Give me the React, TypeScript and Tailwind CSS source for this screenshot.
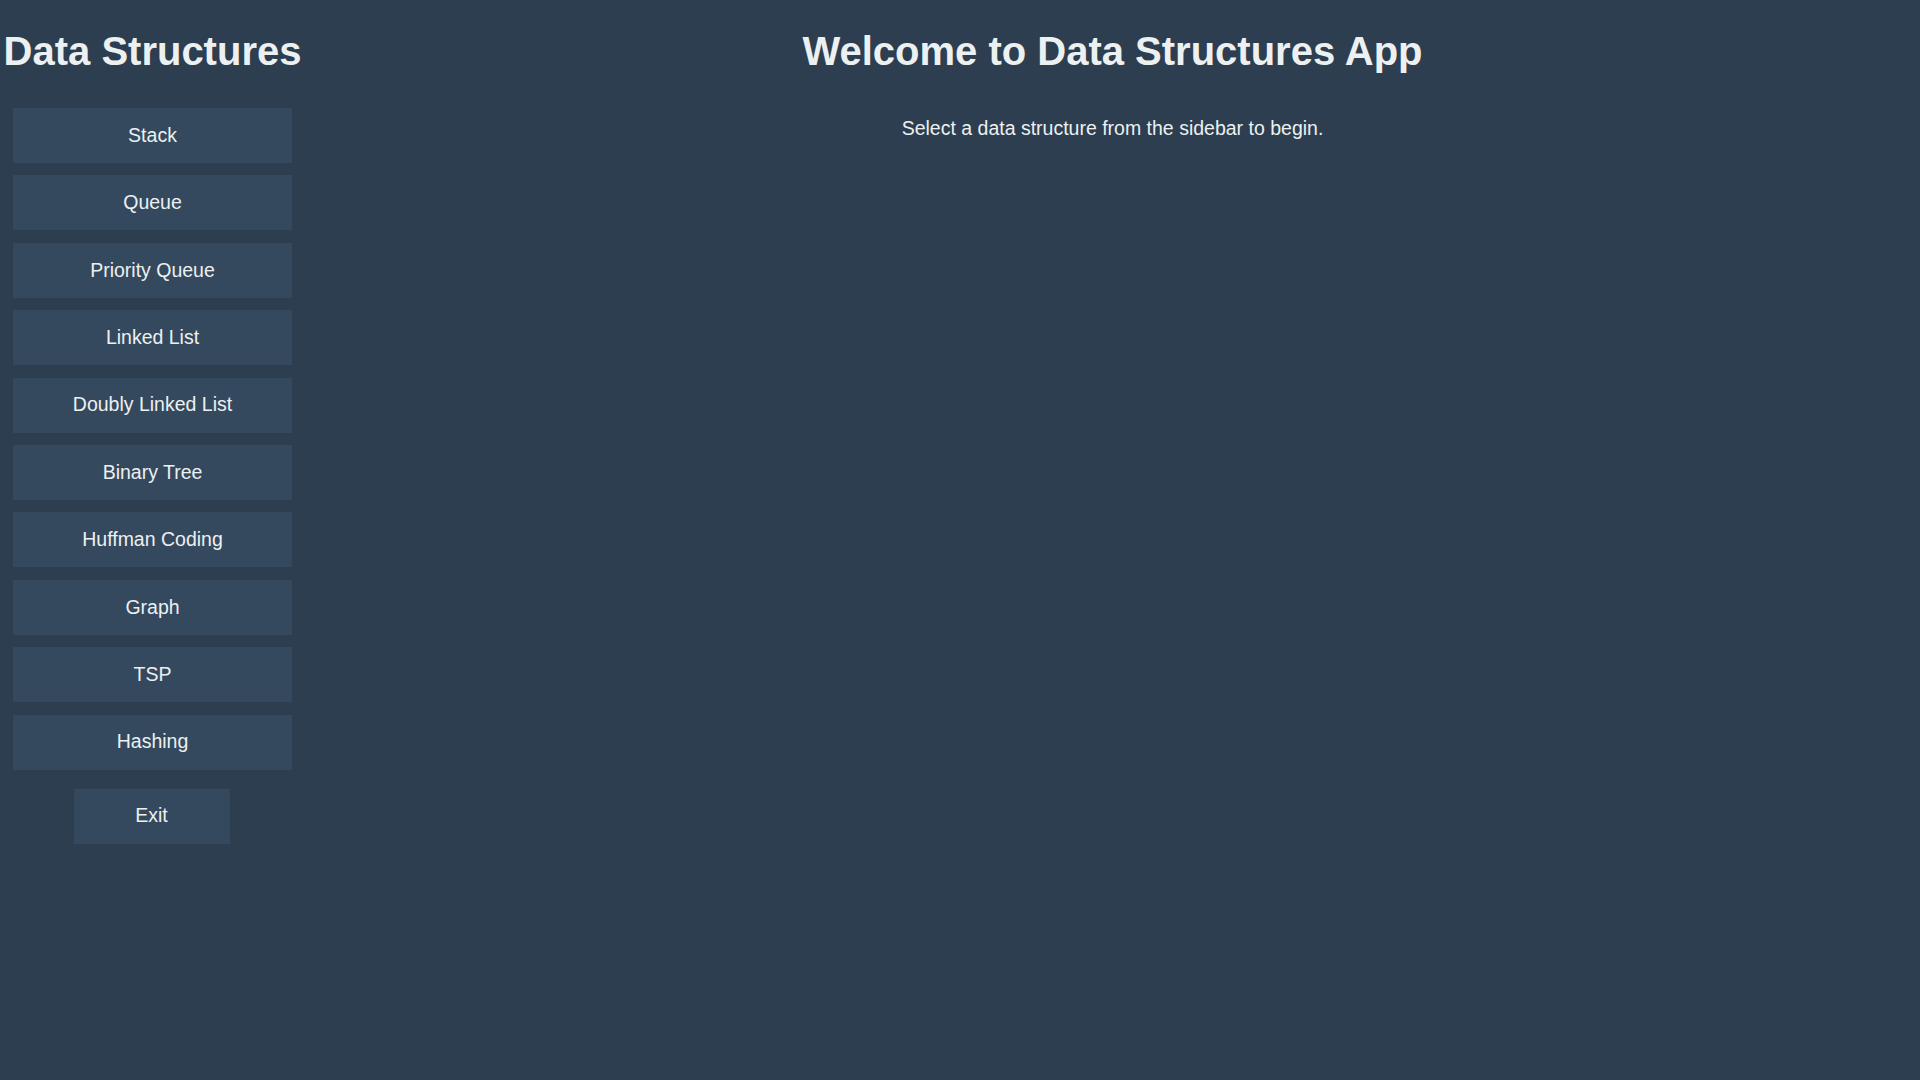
const items = [
  'Stack',
  'Queue',
  'Priority Queue',
  'Linked List',
  'Doubly Linked List',
  'Binary Tree',
  'Huffman Coding',
  'Graph',
  'TSP',
  'Hashing',
];

export default function App() {
  return (
    <div
      className="flex h-screen w-full bg-[#2c3e50] text-[#ecf0f1]"
      style={{ fontFamily: '"Liberation Sans", Arial, sans-serif' }}
    >
      <aside className="flex w-[305px] flex-col items-center">
        <h1 className="mt-[31px] text-[40px] font-bold leading-none">Data Structures</h1>
        <div className="mt-[37px] flex flex-col gap-[12.4px]">
          {items.map((name) => (
            <button
              key={name}
              className="h-[55px] w-[279px] bg-[#34495e] text-[19.5px] text-[#ecf0f1]"
            >
              {name}
            </button>
          ))}
        </div>
        <button className="mt-[19px] h-[55px] w-[156px] -translate-x-px bg-[#34495e] text-[19.5px] text-[#ecf0f1]">
          Exit
        </button>
      </aside>

      <main className="flex flex-1 flex-col items-center">
        <h1 className="mt-[31px] text-[40px] font-bold leading-none">Welcome to Data Structures App</h1>
        <p className="mt-[45px] text-[19.5px] leading-[24px]">Select a data structure from the sidebar to begin.</p>
      </main>
    </div>
  );
}
